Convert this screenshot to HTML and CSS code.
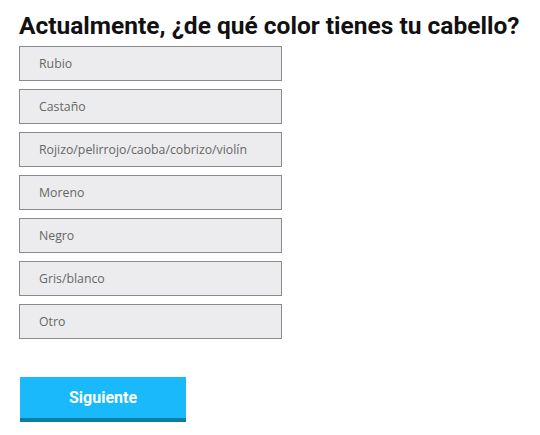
FILE: index.html
```html
<!DOCTYPE html>
<html lang="es">
<head>
<meta charset="utf-8">
<link rel="stylesheet" href="styles.css">
</head>
<body>
<main class="quiz">
  <h1 class="question">Actualmente, ¿de qué color tienes tu cabello?</h1>
  <ul class="options">
    <li class="option">Rubio</li>
    <li class="option">Castaño</li>
    <li class="option">Rojizo/pelirrojo/caoba/cobrizo/violín</li>
    <li class="option">Moreno</li>
    <li class="option">Negro</li>
    <li class="option">Gris/blanco</li>
    <li class="option">Otro</li>
  </ul>
  <button class="next">Siguiente</button>
</main>
</body>
</html>
```
FILE: styles.css
```css
html, body { margin: 0; padding: 0; background: #fff; }
.quiz { padding: 12px 0 0 19px; }
.question {
  margin: 0;
  font-family: Roboto, sans-serif;
  font-weight: 700;
  font-size: 24.5px;
  line-height: 28px;
  color: #111;
  letter-spacing: 0;
}
.options {
  list-style: none;
  margin: 6px 0 0;
  padding: 0;
  display: flex;
  flex-direction: column;
  gap: 8px;
}
.option {
  box-sizing: border-box;
  width: 263px;
  height: 35px;
  border: 1px solid #8a8a8c;
  background: #ececee;
  padding: 0 0 1px 19px;
  display: flex;
  align-items: center;
  font-family: "Open Sans", sans-serif;
  font-size: 12.3px;
  color: #666;
}
.next {
  display: block;
  margin: 38px 0 0 1px;
  width: 166px;
  height: 45px;
  border: 0;
  border-bottom: 4px solid #0a7fa3;
  background: #1ab9fb;
  color: #fff;
  font-family: Roboto, sans-serif;
  font-weight: 700;
  font-size: 16px;
  padding: 0;
}
```
